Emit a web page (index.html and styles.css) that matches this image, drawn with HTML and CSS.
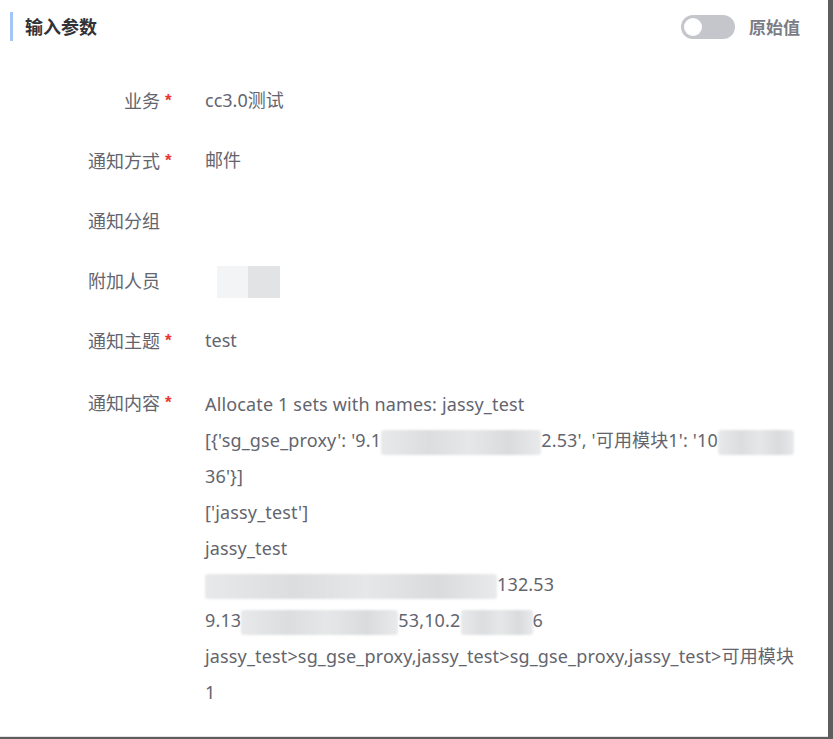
FILE: index.html
```html
<!DOCTYPE html>
<html lang="zh">
<head>
<meta charset="utf-8">
<link rel="stylesheet" href="styles.css">
</head>
<body>
<div class="frame">
  <div class="panel">
    <div class="header">
      <div class="title">输入参数</div>
      <div class="switch-wrap">
        <span class="switch"><span class="knob"></span></span>
        <span class="switch-text">原始值</span>
      </div>
    </div>
    <div class="form">
      <div class="row">
        <div class="label required">业务</div>
        <div class="value">cc3.0测试</div>
      </div>
      <div class="row">
        <div class="label required">通知方式</div>
        <div class="value">邮件</div>
      </div>
      <div class="row">
        <div class="label">通知分组</div>
        <div class="value"></div>
      </div>
      <div class="row">
        <div class="label">附加人员</div>
        <div class="value"><span class="blur-user"><span class="bu1"></span><span class="bu2"></span></span></div>
      </div>
      <div class="row">
        <div class="label required">通知主题</div>
        <div class="value">test</div>
      </div>
      <div class="row row-content">
        <div class="label required">通知内容</div>
        <div class="value content">
          <div class="line">Allocate 1 sets with names: jassy_test</div>
          <div class="line">[{'sg_gse_proxy': '9.1<span class="blur b1"></span>2.53', '可用模块1': '10<span class="blur b2"></span></div>
          <div class="line">36'}]</div>
          <div class="line">['jassy_test']</div>
          <div class="line">jassy_test</div>
          <div class="line"><span class="blur b3"></span>132.53</div>
          <div class="line">9.13<span class="blur b4"></span>53,10.2<span class="blur b5"></span>6</div>
          <div class="line">jassy_test&gt;sg_gse_proxy,jassy_test&gt;sg_gse_proxy,jassy_test&gt;可用模块</div>
          <div class="line">1</div>
        </div>
      </div>
    </div>
  </div>
</div>
</body>
</html>
```
FILE: styles.css
```css
* { box-sizing: border-box; }
html, body { margin: 0; padding: 0; background: #fff; }
body {
  font-family: "Noto Sans", "Noto Sans CJK SC", sans-serif;
  color: #63656e;
}
.frame {
  width: 833px;
  height: 739px;
  border-right: 5px solid #5e5e5e;
  border-bottom: 2px solid #5e5e5e;
  overflow: hidden;
}
.panel {
  height: 100%;
  border-bottom: 1px solid #e4e4e4;
}
.header {
  display: flex;
  align-items: center;
  justify-content: space-between;
  padding: 12px 28px 0 10px;
  height: 29px;
  box-sizing: content-box;
}
.title {
  border-left: 3px solid #a3c5f7;
  height: 29px;
  line-height: 29px;
  padding-left: 12px;
  font-size: 18px;
  font-weight: 700;
  color: #313238;
  font-family: "Noto Sans CJK SC", sans-serif;
}
.switch-wrap {
  display: flex;
  align-items: center;
  gap: 14px;
}
.switch {
  width: 54px;
  height: 24px;
  border-radius: 12px;
  background: #c4c6cc;
  position: relative;
  display: block;
}
.knob {
  position: absolute;
  left: 3px;
  top: 3px;
  width: 18px;
  height: 18px;
  border-radius: 50%;
  background: #fff;
}
.switch-text {
  font-size: 17px;
  font-weight: 700;
  color: #7a7c85;
  font-family: "Noto Sans CJK SC", sans-serif;
}
.form {
  padding-top: 41px;
  display: flex;
  flex-direction: column;
  gap: 24px;
}
.row {
  display: flex;
  align-items: flex-start;
  line-height: 36px;
  font-size: 18px;
}
.row-content { margin-top: 2px; }
.label {
  width: 160px;
  text-align: right;
  position: relative;
  flex-shrink: 0;
  font-family: "Noto Sans CJK SC", sans-serif;
  font-size: 18px;
  min-height: 36px;
}
.label.required::after {
  content: "*";
  color: #ea3636;
  position: absolute;
  left: 100%;
  top: 1px;
  margin-left: 5px;
  font-size: 17px;
  font-weight: 700;
  font-family: "Liberation Sans", sans-serif;
}
.value {
  margin-left: 45px;
  min-height: 36px;
  white-space: nowrap;
}
.content { letter-spacing: 0.15px; }
.content .line:first-child { margin-top: 2px; }
.blur {
  display: inline-block;
  height: 25px;
  vertical-align: middle;
  border-radius: 3px;
  background: linear-gradient(90deg, #e8e9ea, #dcdddf 30%, #e6e7e8 55%, #dadbdd 80%, #e9eaeb);
  filter: blur(1px);
}
.b1 { width: 160px; }
.b2 { width: 76px; }
.b3 { width: 292px; }
.b4 { width: 157px; }
.b5 { width: 72px; }
.blur-user {
  display: inline-flex;
  height: 32px;
  vertical-align: middle;
  margin-left: 12px;
}
.bu1 { width: 31px; background: #f3f4f5; }
.bu2 { width: 32px; background: #e1e3e5; }
```
